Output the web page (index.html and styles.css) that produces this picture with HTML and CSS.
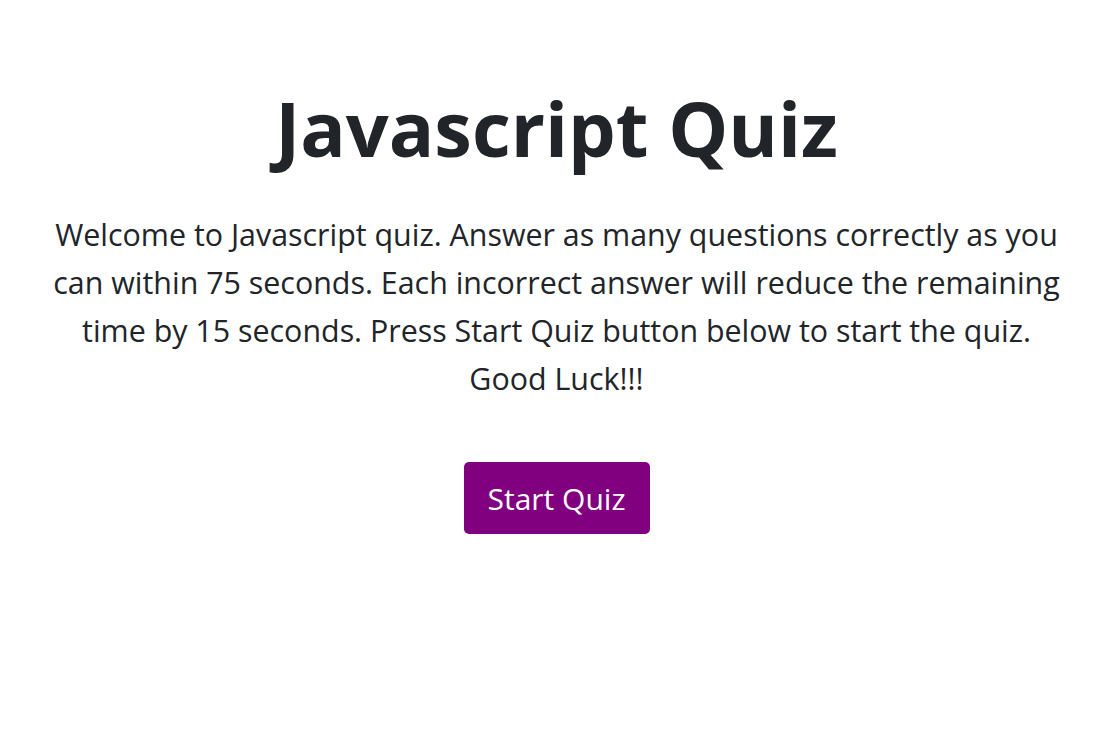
FILE: index.html
```html
<!DOCTYPE html>
<html lang="en">
<head>
<meta charset="utf-8">
<title>Javascript Quiz</title>
<link rel="stylesheet" href="styles.css">
</head>
<body>
<main class="quiz">
  <h1 class="title">Javascript Quiz</h1>
  <p class="intro">Welcome to Javascript quiz. Answer as many questions correctly as you<br>can within 75 seconds. Each incorrect answer will reduce the remaining<br>time by 15 seconds. Press Start Quiz button below to start the quiz.<br>Good Luck!!!</p>
  <button class="start-btn" type="button">Start Quiz</button>
</main>
</body>
</html>
```

FILE: styles.css
```css
html, body {
  margin: 0;
  padding: 0;
  background: #ffffff;
}

body {
  font-family: "Open Sans", "Noto Sans", "DejaVu Sans", sans-serif;
  color: #212529;
}

.quiz {
  display: flex;
  flex-direction: column;
  align-items: center;
  text-align: center;
  padding: 80px 0 0 20px;
}

.title {
  margin: 0;
  font-size: 75.5px;
  font-weight: 700;
  line-height: 96px;
}

.intro {
  margin: 35px 0 0;
  font-size: 30.4px;
  line-height: 48px;
}

.start-btn {
  margin-top: 59px;
  width: 186px;
  height: 72px;
  border: none;
  border-radius: 5px;
  background: #800080;
  color: #ffffff;
  font-family: inherit;
  font-size: 30px;
  cursor: pointer;
}
```
